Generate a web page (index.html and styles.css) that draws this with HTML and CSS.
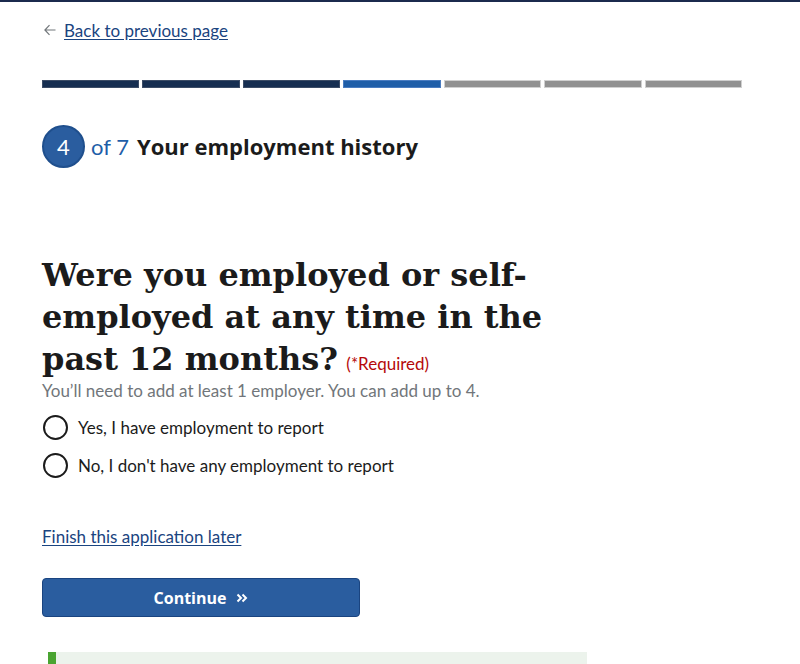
FILE: index.html
```html
<!DOCTYPE html>
<html lang="en">
<head>
<meta charset="utf-8">
<title>Your employment history</title>
<link rel="stylesheet" href="styles.css">
</head>
<body>
<div class="topline"></div>
<main class="page">
  <nav class="back">
    <svg class="back-arrow" width="12" height="12" viewBox="0 0 12 12" aria-hidden="true"><path d="M11.5 6H1M5.5 1.2L0.9 6 5.5 10.8" fill="none" stroke="#71767a" stroke-width="1.2"/></svg>
    <a href="#" class="link">Back to previous page</a>
  </nav>

  <div class="steps">
    <span class="seg done"></span>
    <span class="seg done"></span>
    <span class="seg done"></span>
    <span class="seg current"></span>
    <span class="seg"></span>
    <span class="seg"></span>
    <span class="seg"></span>
  </div>

  <h2 class="step-heading">
    <span class="counter">4</span>
    <span class="total">of 7</span>
    <span class="step-title">Your employment history</span>
  </h2>

  <fieldset class="question">
    <legend class="legend">
      <span class="q">Were you employed or self-employed at any time in the past 12&nbsp;months?</span>
      <span class="req">(*Required)</span>
    </legend>
    <p class="hint">You’ll need to add at least 1 employer. You can add up to 4.</p>
    <label class="radio"><input type="radio" name="emp"><span class="circle"></span>Yes, I have employment to report</label>
    <label class="radio"><input type="radio" name="emp"><span class="circle"></span>No, I don't have any employment to report</label>
  </fieldset>

  <a href="#" class="link finish">Finish this application later</a>

  <button class="btn" type="button">Continue <svg class="chev" width="12" height="10" viewBox="0 0 12 10" aria-hidden="true"><path d="M1.5 1.5L5 5 1.5 8.5M6.5 1.5L10 5 6.5 8.5" fill="none" stroke="#fff" stroke-width="2"/></svg></button>

  <div class="alert"></div>
</main>
</body>
</html>
```

FILE: styles.css
```css
* { box-sizing: border-box; }
html, body { margin: 0; padding: 0; background: #fff; }
body {
  font-family: Lato, "Noto Sans", sans-serif;
  font-size: 17px;
  color: #1b1b1b;
}
.topline { height: 2px; background: #1b2a4e; }
.page { padding: 0 58px 0 42px; }

.back { display: flex; align-items: center; gap: 8px; margin-top: 18px; padding-left: 2px; height: 20px; }
.back-arrow { display: block; }
.link { color: #1a4480; text-decoration: underline; text-underline-offset: 2px; }

.steps { display: flex; gap: 3px; margin-top: 40px; }
.seg { flex: 1; height: 8px; background: #919191; border: 1px solid #d0d0d0; }
.seg.done { background: #162e51; border-color: #3c4c66; }
.seg.current { background: #1f5ea8; border-color: #4a7cc0; }

.step-heading { display: flex; align-items: center; margin: 36px 0 0; font-size: 22px; font-weight: 400; height: 44px; }
.counter {
  width: 43px; height: 43px; border-radius: 50%;
  background: #2a5d9f; border: 2px solid #1f4f8d; color: #fff;
  display: flex; align-items: center; justify-content: center;
  font-size: 22px; margin-right: 6px;
}
.total { color: #1f5ea8; margin-right: 8px; }
.step-title { font-family: "Open Sans", sans-serif; font-weight: 700; font-size: 22px; color: #1b1b1b; }

.question { border: 0; margin: 86px 0 0; padding: 0; min-width: 0; }
.legend { padding: 0; width: 540px; }
.q { font-family: "DejaVu Serif", serif; font-weight: 700; font-size: 32px; line-height: 42px; color: #1b1b1b; }
.req { display: inline-block; color: #b50909; font-size: 17px; line-height: 20px; margin-left: 4px; }
.hint { color: #71767a; margin: 0; line-height: 22px; }

.radio { display: flex; align-items: center; height: 38px; }
.radio:first-of-type { margin-top: 6px; }
.radio input { position: absolute; opacity: 0; width: 0; height: 0; }
.circle { width: 25px; height: 25px; border: 2px solid #1b1b1b; border-radius: 50%; margin: 0 10px 0 1px; flex: none; }

.finish { display: inline-block; margin-top: 42px; }

.btn {
  display: flex; align-items: center; justify-content: center; gap: 10px;
  width: 318px; height: 39px; margin-top: 31px;
  background: #2a5d9f; border: 1px solid #1a4480; border-radius: 4px;
  color: #fff; font-family: "Open Sans", sans-serif; font-size: 16px; font-weight: 700;
}
.chev { display: block; }

.alert { margin: 35px 0 0 6px; width: 539px; height: 40px; background: #ecf3ec; border-left: 8px solid #4aa431; }
```
